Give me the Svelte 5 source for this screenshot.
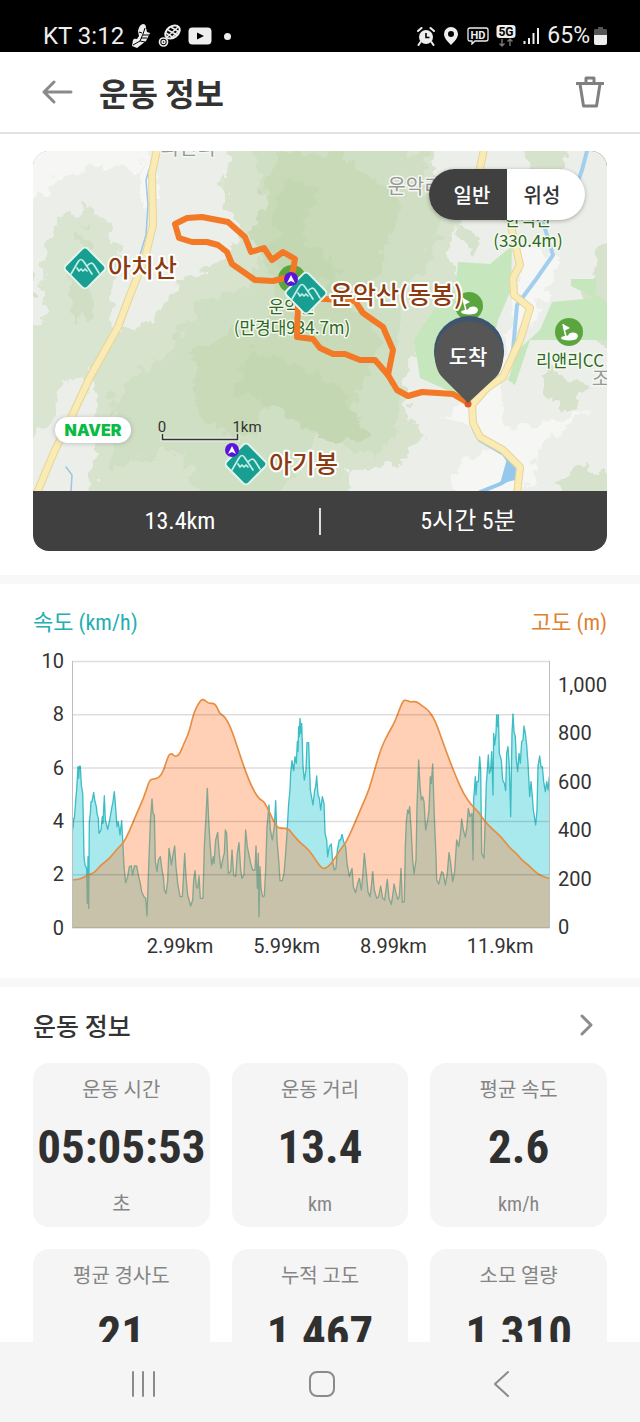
<script>
  let mapType = $state('일반');

  const stats = [
    { label: '운동 시간', value: '05:05:53', unit: '초' },
    { label: '운동 거리', value: '13.4', unit: 'km' },
    { label: '평균 속도', value: '2.6', unit: 'km/h' },
    { label: '평균 경사도', value: '21', unit: '%' },
    { label: '누적 고도', value: '1,467', unit: 'm' },
    { label: '소모 열량', value: '1,310', unit: 'kcal' }
  ];

  const speedTicks = [10, 8, 6, 4, 2, 0];
  const heightTicks = ['0', '200', '400', '600', '800', '1,000'];
  const distTicks = ['2.99km', '5.99km', '8.99km', '11.9km'];

  // Samples are stored per leg, in thirds of a chart unit.
  const heightLegs = [
    '157,840 171,839 185,835 210,823 225,817 240,797 270,775 292,745 310,730 330,690 350,640 372,592 388,540 400,537 415,535 430,515 445,465 455,460 465,470 478,465 492,430 508,395 522,335 542,300 553,298 565,311 585,309 598,338',
    '3,222 18,235 35,270 55,330 75,390 95,440 115,475 133,485 150,520 170,562 185,565 205,565 220,585 240,608 268,630 290,665 308,688 325,680 340,662 360,630 378,608 400,560 425,500 447,450 465,385 485,320 505,280 525,245 548,182 558,180 570,186 590,184',
    '4,316 25,330 45,360 70,430 90,485 110,535 130,580 155,617 175,635 195,665 220,690 245,712 270,745 290,760 305,780 325,795 350,820 370,830 388,835'
  ];
  const speedLegs = [
    '157,690 160,680 161,655 163,655 165,630 168,590 170,570 172,535 174,500 176,535 178,500 180,498 181,500 184,555 188,580 190,660 192,770 195,795 200,805 202,910 204,770 206,925 208,665 211,640 213,605 216,605 221,577 224,600 229,620 231,640 235,655 237,700 243,690 247,650 249,670 253,587 256,660 263,688 270,655 275,625 279,605 283,575 287,625 291,680 295,665 300,705 305,662 308,720 312,800 317,848 323,830 328,800 334,798 338,825 343,798 350,798 356,830 361,850 365,875 372,890 377,895 381,948 385,830 391,665 396,597 399,640 403,645 406,785 411,815 415,780 421,770 426,810 430,830 433,870 438,880 443,845 447,745 451,770 454,795 458,770 464,738 468,800 473,850 480,890 487,890 490,840 494,760 498,830 503,885 512,918 518,900 521,840 525,812 529,860 533,865 537,828 541,895 549,895 553,740 558,650 562,565 566,660 570,730 575,795 580,770 582,790 587,720 593,697 598,765',
    '3,685 10,650 13,640 16,570 20,580 25,700 32,695 36,630 41,705 47,710 52,640 57,608 62,690 66,715 72,705 77,570 82,620 87,645 92,670 98,690 105,690 108,618 112,745 115,640 117,830 120,680 123,745 128,770 133,768 137,690 141,560 147,495 151,570 157,600 163,560 167,482 171,600 176,660 180,722 187,722 192,700 197,640 201,580 206,490 210,450 212,400 216,362 221,392 225,350 229,370 232,305 234,335 236,260 238,290 240,235 243,280 245,250 247,310 249,380 253,420 258,390 261,308 266,308 268,370 271,450 279,495 284,450 287,440 290,408 294,465 298,475 302,510 307,470 312,490 315,580 320,600 323,650 328,620 334,612 338,665 343,690 348,685 352,630 358,600 362,600 366,583 371,605 377,620 381,670 388,710 396,685 400,740 407,758 413,730 418,715 424,750 429,700 433,640 438,690 444,755 450,770 454,740 458,695 463,750 470,775 476,770 482,738 488,775 494,780 499,740 502,718 507,775 514,793 519,760 522,732 527,755 533,778 538,770 543,685 547,787 553,785 556,620 559,545 563,510 566,520 569,500 574,580 578,660 582,702 588,660 591,500 596,360 600,440 604,480 608,470 612,485 617,570 623,540 627,510 631,410 634,430 638,372 643,530 648,650',
    '50,840 56,852 65,815 70,820 76,855 82,820 87,758 92,790 98,845 104,815 110,720 116,740 121,705 125,657 130,690 136,712 141,680 145,625 150,650 156,640 159,780 161,600 164,560 166,530 168,585 171,545 175,545 179,470 182,510 185,760 192,775 196,650 199,550 201,525 205,465 208,520 212,510 215,455 219,585 221,400 224,435 228,400 230,345 233,380 235,345 238,460 244,480 248,540 253,550 257,572 260,460 264,440 268,500 272,650 276,400 279,342 282,395 286,410 289,480 293,515 297,460 301,490 305,425 309,420 312,378 316,400 320,435 324,490 329,590 333,545 337,590 340,630 347,675 351,630 354,500 359,468 363,500 367,500 371,545 376,575 380,545 384,570 388,530'
  ];
  const legOrigin = [[0, 0], [600, 120], [1200, 0]];

  const points = (legs) =>
    legs.flatMap((leg, i) =>
      leg.split(' ').map((p) => {
        const [x, y] = p.split(',').map(Number);
        return [x + legOrigin[i][0], y + legOrigin[i][1]];
      })
    );
  const straight = (pts) => 'M' + pts.map((p) => p.join(' ')).join('L');
  // Quadratic segments through the midpoints round off the height profile.
  const smooth = (pts) => {
    let d = `M${pts[0].join(' ')}`;
    for (let i = 1; i < pts.length - 1; i++) {
      const [x, y] = pts[i];
      const [nx, ny] = pts[i + 1];
      d += `Q${x} ${y} ${(x + nx) / 2} ${(y + ny) / 2}`;
    }
    return d + `L${pts[pts.length - 1].join(' ')}`;
  };
  const area = (path) => path + 'L1588 984L157 984Z';

  const heightLine = smooth(points(heightLegs));
  const speedLine = straight(points(speedLegs));
</script>

{#snippet peak(x, y)}
  <g transform="translate({x} {y})">
    <rect x="-15.500" y="-15.500" width="31" height="31" rx="4" transform="rotate(45)" fill="#189f92" stroke="#e2f5ee" stroke-width="2" />
    <path d="M-14 6L-7 -6Q-4 -11 -1 -6L7 6M2 -2Q6 -7 9 -3L14 5M-8 0L-6 3L-4 1L-2 3L0 1L2 3" fill="none" stroke="#c4efe7" stroke-width="1.700" stroke-linejoin="round" stroke-linecap="round" />
  </g>
{/snippet}

{#snippet spot(x, y)}
  <g transform="translate({x} {y})">
    <circle r="7" fill="#5a16d8" />
    <path d="M0 -4L4 4L0 2L-4 4Z" fill="#fff" />
  </g>
{/snippet}

{#snippet golf(x, y)}
  <g transform="translate({x} {y})">
    <circle r="14" fill="#5ba53f" />
    <path d="M-6 -8L1 -4L-5 -1Z" fill="#fff" />
    <path d="M-6 -8L-3 5" fill="none" stroke="#fff" stroke-width="1.500" />
    <ellipse cx="0" cy="6" rx="8" ry="2.500" fill="#fff" />
    <ellipse cx="4" cy="4" rx="5" ry="3.500" fill="#fff" />
  </g>
{/snippet}

<div class="phone">
  <div class="status">
    <div class="side">
      <span>KT 3:12</span>
      <svg width="20" height="26" viewBox="0 0 20 26">
        <path d="M1 23L2 17Q3 15 6 16L8 13L7 8Q8 2 12 1Q15 1 15 5L16 9L19 10L15 18L6 25Z" fill="#eee" />
        <path d="M2 22L9 18L12 11L14 5M12 12L18 12M10 15L16 15M9 18L14 19M8 9L11 10" stroke="#000" stroke-width="1" fill="none" />
      </svg>
      <svg width="23" height="24" viewBox="0 0 23 24">
        <g fill="none" stroke="#eee">
          <ellipse cx="14.500" cy="8" rx="8" ry="5.600" transform="rotate(-38 14.500 8)" stroke-width="2" />
          <path d="M8 9L16 14M10 6L19 11M13 3L21 8M9 13L20 3M13 14L22 6" stroke-width="1.500" />
          <circle cx="5.500" cy="18" r="4" stroke-width="1.700" />
          <circle cx="5.500" cy="18" r="1.500" stroke-width="1.500" />
        </g>
      </svg>
      <svg width="24" height="18" viewBox="0 0 24 18"><rect x="0.500" y="0.500" width="23" height="17" rx="4" fill="#eee" /><path d="M9 5.500L16 9L9 12.500Z" fill="#000" /></svg>
      <i class="dot"></i>
    </div>
    <div class="side">
      <svg width="18" height="19" viewBox="0 0 18 19">
        <circle cx="9" cy="10" r="7" fill="#eee" />
        <path d="M1 4L4.500 1M17 4L13.500 1M3.500 15L1.500 18M14.500 15L16.500 18" stroke="#eee" stroke-width="2" stroke-linecap="round" />
        <path d="M9 6V10.500H12.500" stroke="#000" stroke-width="1.600" fill="none" />
      </svg>
      <svg width="18" height="20" viewBox="0 0 18 20"><path fill-rule="evenodd" d="M9 1A7 7 0 0 1 16 8C16 12 12 16 9 19C6 16 2 12 2 8A7 7 0 0 1 9 1ZM9 5A3 3 0 1 0 9 11A3 3 0 1 0 9 5Z" fill="#eee" /></svg>
      <svg width="22" height="18" viewBox="0 0 22 18">
        <path d="M3 1H19Q21 1 21 3V12Q21 14 19 14H8L5 17V14H3Q1 14 1 12V3Q1 1 3 1Z" fill="none" stroke="#eee" stroke-width="1.300" />
        <text x="11" y="11.500" text-anchor="middle" fill="#eee" font-size="11" font-weight="700">HD</text>
      </svg>
      <svg width="20" height="24" viewBox="0 0 20 24">
        <rect x="0.500" y="1" width="19" height="13" rx="3" fill="#eee" />
        <text x="10" y="12" text-anchor="middle" fill="#000" font-size="12" font-weight="700">5G</text>
        <path d="M6 15V22M3.500 19.500L6 22L8.500 19.500M14 22V15M11.500 17.500L14 15L16.500 17.500" fill="none" stroke="#777" stroke-width="1.400" />
      </svg>
      <svg width="17" height="18" viewBox="0 0 17 18"><path d="M1.500 14V17M6 11V17M10.500 6V17M15 1V17" stroke="#eee" stroke-width="2" /></svg>
      <span class="pct">65%<svg width="13" height="19" viewBox="0 0 13 19"><path d="M4 0H9V2H12Q13 2 13 4V9H0V4Q0 2 1 2H4Z" fill="#555" /><path d="M0 8H13V16Q13 18 11 18H2Q0 18 0 16Z" fill="#eee" /></svg></span>
    </div>
  </div>

  <header>
    <button class="icon" aria-label="뒤로">
      <svg width="32" height="26" viewBox="0 0 32 26"><path d="M30 13H3M13 3L3 13L13 23" fill="none" stroke="#8a8a8a" stroke-width="3" stroke-linecap="round" stroke-linejoin="round" /></svg>
    </button>
    <h1>운동 정보</h1>
    <button class="icon" aria-label="삭제">
      <svg width="28" height="32" viewBox="0 0 28 32"><path d="M1 7.500H27M10 7V2H18V7M4 8L7.500 30H20.500L24 8" fill="none" stroke="#808080" stroke-width="3" stroke-linejoin="round" stroke-linecap="round" /></svg>
    </button>
  </header>

  <main>
    <section class="map-section">
      <div class="card">
        <div class="map">
          <svg viewBox="33 151 574 340" role="img" aria-label="운동 경로 지도">
            <defs>
              <filter id="rough" x="-10%" y="-10%" width="120%" height="120%">
                <feTurbulence type="fractalNoise" baseFrequency="0.07" numOctaves="3" seed="8" />
                <feDisplacementMap in="SourceGraphic" scale="26" xChannelSelector="R" yChannelSelector="G" />
              </filter>
              <filter id="soft" x="-20%" y="-20%" width="140%" height="150%"><feGaussianBlur stdDeviation="2" /></filter>
            </defs>
            <rect x="33" y="151" width="574" height="340" fill="#eceee9" />
            <g filter="url(#rough)">
              <path d="M20 140H150L140 170L100 165L60 180L20 210Z M145 150L160 190L150 215L138 200Z M520 250L560 255L545 300L520 330L500 390L510 430L590 410L540 445L525 500H460L450 480L490 440L445 415L470 385L505 350Z" fill="#f6f6f5" />
              <path d="M52 225L85 205L112 228L118 260L108 300L112 330L98 365L70 390L62 420L20 440V330L48 320L40 290Z" fill="#d9e4d1" />
              <path d="M235 140H440L430 170L460 200L450 250L455 275L470 285L440 310L420 345L400 385L410 410L425 440L395 465L350 470L345 500H90V370L120 330L150 320L180 280L225 260L240 230L220 190Z" fill="#d7e3cd" />
              <path d="M62 385L90 378L96 420L93 500H35Z" fill="#eceee9" />
              <path d="M250 140H400L420 180L440 215L430 260L400 300L400 330L385 370L400 400L395 440L360 455L320 430L290 470L280 500H200L180 450L110 470L115 390L170 350L200 300L250 290L270 220Z" fill="#cfdfc3" />
              <path d="M280 150L340 155L400 200L380 270L350 300L385 345L370 370L350 420L310 420L270 400L250 440L200 420L190 360L230 330L265 320L280 290L250 240Z" fill="#c8dab8" />
              <path d="M285 180L320 190L300 240L345 270L330 290L300 270L270 250Z M250 350L310 370L350 400L370 440L320 440L280 410L235 390Z" fill="#c3d7b2" />
              <path d="M85 225L95 260L92 310L75 330L70 280Z M390 160L430 150L415 200L440 240L410 280Z" fill="#d0dfc4" />
              <path d="M520 140H570L560 175L530 180Z M595 250L620 245V360L595 340L585 300Z M550 370L590 385L570 410L545 395Z M560 480L580 465L610 475V500H555Z M20 150L30 240V300H20Z M455 225L480 235L470 255Z" fill="#d6e2cb" />
            </g>
            <path d="M458 262L490 264L512 246L511 290L498 320L490 355L500 375L470 400L420 378L414 340L440 300L455 290Z" fill="#c6e6bd" />
            <path d="M571 279H596V294L607 302V340H530L515 385L508 380L518 350L540 330L552 302L595 298L571 286Z" fill="#c6e6bd" />
            <g fill="none" stroke-linejoin="round" stroke-linecap="round">
              <path d="M155 151L146 180L148 205L146 235L140 255M66 467L72 475L71 491" stroke="#9cc6e6" stroke-width="1.500" />
              <path d="M587 151L582 170L575 190L543 222L553 255L537 278L517 305L513 350L503 378" stroke="#a3cfee" stroke-width="4" />
              <path d="M471 410L473 428L480 440L504 454L512 466L510 478L500 484L480 492" stroke="#94c8ec" stroke-width="4" />
              <path d="M508 455L518 468L515 480L500 484Z" fill="#94c8ec" />
              <g stroke="#e6d594" stroke-width="8">
                <path id="road-west" d="M158 145L152 173L153 225L145 258L130 295L118 327L90 377L70 420L55 450L36 495" />
                <path id="road-east" d="M485 145L480 168L495 205L510 222L517 252L520 265L513 278L514 295L530 308L520 340L503 377L487 388L472 405L473 423L480 437L503 450L520 467L517 495" />
              </g>
              <g stroke="#faeab4" stroke-width="6"><use href="#road-west" /><use href="#road-east" /></g>
              <circle cx="292" cy="279" r="14" fill="#5ba53f" />
            </g>
            {@render golf(469, 306)}
            {@render golf(569, 332)}

            <g class="place">
              <text x="188" y="155" class="gray">외전리</text>
              <text x="415" y="194" class="gray">운악리</text>
              <text x="601" y="386" class="gray">조</text>
              <g class="green">
                <text x="292" y="313">운악산</text>
                <text x="292" y="334">(만경대934.7m)</text>
                <text x="528" y="226">한석산</text>
                <text x="528" y="247">(330.4m)</text>
                <text x="570" y="367">리앤리CC</text>
              </g>
            </g>

            <g fill="none" stroke="#f37926" stroke-width="6" stroke-linejoin="round" stroke-linecap="round">
              <path d="M292 276L273 281L255 280L232 264L227 252L218 245L207 242L192 242L179 238L175 224L187 218L202 217L228 222L245 237L251 252L264 248L272 260L283 252L295 259L292 276" />
              <path d="M298 300L297 337L313 339L320 348L333 354L345 354L360 360L375 360L388 375L397 390L408 396L422 392L453 394L468 403" />
              <path d="M310 298L355 301L363 313L383 327L393 350L388 375" />
            </g>

            {@render peak(85, 268)}
            {@render peak(306, 293)}
            {@render peak(246, 464)}
            {@render spot(291, 279)}
            {@render spot(232, 450)}
            <g class="summit">
              <text x="108" y="277">아치산</text>
              <text x="330" y="304">운악산(동봉)</text>
              <text x="269" y="473">아기봉</text>
            </g>

            <circle cx="468" cy="404" r="3.500" fill="#e05a28" />
            <path d="M468 400L443 376C437 370 434 360 434 351A35 35 0 0 1 504 351C504 360 501 370 495 376Z" fill="#3d5570" />
            <path d="M468 403L443 378C437 372 435 364 435 355A34 34 0 0 1 503 355C503 364 501 372 495 378Z" fill="#565656" />
            <text x="468" y="364" class="pin">도착</text>

            <rect x="54" y="417" width="78" height="27" rx="13" fill="#889" opacity="0.400" filter="url(#soft)" />
            <rect x="55" y="417" width="76" height="26" rx="13" fill="#fff" />
            <text x="93" y="436" class="naver">NAVER</text>
            <path d="M162.500 434V439.500H237.500V434" fill="none" stroke="#fff" stroke-width="4" opacity="0.500" />
            <path d="M162.500 434V439.500H237.500V434" fill="none" stroke="#333" stroke-width="1.500" />
            <g class="scale"><text x="162" y="432">0</text><text x="247" y="432">1km</text></g>
          </svg>
          <div class="toggle">
            {#each ['일반', '위성'] as type}
              <button class:on={mapType === type} aria-pressed={mapType === type} onclick={() => (mapType = type)}>{type}</button>
            {/each}
          </div>
        </div>
        <div class="summary"><span>13.4km</span><i></i><span>5시간 5분</span></div>
      </div>
    </section>

    <section class="chart-section">
      <div class="legend"><span class="speed">속도 (km/h)</span><span class="height">고도 (m)</span></div>
      <svg class="chart" viewBox="33 646 574 316" role="img" aria-label="속도와 고도 그래프">
        <g transform="translate(20 600) scale(0.333333)" stroke-linejoin="round">
          <path d={area(speedLine)} fill="#a8e9ed" />
          <path d={speedLine} fill="none" stroke="#3dbdc5" stroke-width="4" />
          <path d={area(heightLine)} fill="#ff7d32" fill-opacity="0.360" />
          <path d={heightLine} fill="none" stroke="#e78e42" stroke-width="5" />
        </g>
        <g stroke="#000" stroke-opacity="0.130" stroke-width="1.500">
          {#each speedTicks as _, i}<path d="M72 {661.5 + i * 53.3}H550" />{/each}
        </g>
        <path d="M72.500 661V928M549.500 661V928" stroke="#bdbdbd" />
        {#each speedTicks as tick, i}<text x="64" y={668 + i * 53.3} text-anchor="end">{tick}</text>{/each}
        {#each heightTicks as tick, i}<text x="558" y={934 - i * 48.4}>{tick}</text>{/each}
        {#each distTicks as tick, i}<text x={180 + i * 106.7} y="953" text-anchor="middle">{tick}</text>{/each}
      </svg>
    </section>

    <section class="info">
      <div class="info-head">
        <h2>운동 정보</h2>
        <button class="icon" aria-label="더보기">
          <svg width="16" height="22" viewBox="0 0 16 22"><path d="M3 2L12 11L3 20" fill="none" stroke="#8c8c8c" stroke-width="3" stroke-linecap="round" stroke-linejoin="round" /></svg>
        </button>
      </div>
      <div class="grid">
        {#each stats as s}
          <div class="stat"><span>{s.label}</span><strong>{s.value}</strong><span>{s.unit}</span></div>
        {/each}
      </div>
    </section>
  </main>

  <nav>
    <button class="icon" aria-label="최근 앱"><svg width="28" height="28" viewBox="0 0 28 28"><path d="M4 2V26M14 2V26M25 2V26" stroke="#8a8a8a" stroke-width="2" stroke-linecap="round" /></svg></button>
    <button class="icon" aria-label="홈"><svg width="28" height="28" viewBox="0 0 28 28"><rect x="2" y="2" width="24" height="24" rx="7" fill="none" stroke="#8a8a8a" stroke-width="2" /></svg></button>
    <button class="icon" aria-label="뒤로 가기"><svg width="28" height="28" viewBox="0 0 28 28"><path d="M21 2L8 14L21 26" fill="none" stroke="#8a8a8a" stroke-width="2" stroke-linecap="round" stroke-linejoin="round" /></svg></button>
  </nav>
</div>

<style>
  :global(body) { margin: 0; background: #fff; }
  .phone {
    display: flex;
    flex-direction: column;
    height: 100vh;
    overflow: hidden;
    color: #333;
    font-family: "Roboto Condensed", "Noto Sans CJK KR", sans-serif;
  }
  button {
    margin: 0;
    padding: 0;
    border: 0;
    background: none;
    font: inherit;
    color: inherit;
    cursor: pointer;
  }
  .icon { display: flex; }
  h1, h2 { margin: 0; font-family: "Noto Sans CJK KR", sans-serif; }

  .status {
    display: flex;
    flex: none;
    justify-content: space-between;
    height: 32px;
    padding: 20px 33px 0 43px;
    background: #000;
    color: #eee;
    font: 24px/32px Roboto, sans-serif;
  }
  .side { display: flex; align-items: center; gap: 7px; }
  .pct { display: flex; align-items: center; gap: 4px; font-size: 23px; }
  .dot { width: 7px; height: 7px; margin-left: 5px; border-radius: 50%; background: #eee; }

  header {
    display: flex;
    flex: none;
    align-items: center;
    gap: 26px;
    height: 80px;
    padding: 0 36px 0 41px;
    border-bottom: 2px solid #e2e2e2;
  }
  h1 { flex: 1; font-size: 32px; line-height: 44px; font-weight: 700; }

  main { flex: 1; min-height: 0; overflow: hidden; }
  section { padding: 0 33px; }
  section + section { border-top: 9px solid #f8f8f8; }
  .map-section { padding-top: 17px; padding-bottom: 24px; }
  .card { overflow: hidden; border-radius: 16px; background: #404040; }
  .map { position: relative; }
  .map svg, .chart { display: block; width: 100%; height: auto; }
  .map text { font-family: "Noto Sans CJK KR", sans-serif; }
  .place text { text-anchor: middle; paint-order: stroke; stroke: #f4f8f0; stroke-width: 3px; stroke-linejoin: round; font-size: 17px; }
  .place .gray { fill: #999; font-size: 20px; }
  .green { fill: #2c6a22; }
  .summit text { fill: #8c3a10; paint-order: stroke; stroke: #fff; stroke-width: 4px; stroke-linejoin: round; font-size: 25px; font-weight: 500; }
  .pin { fill: #fff; text-anchor: middle; font-size: 21px; font-weight: 500; }
  .map .naver { fill: #09bb44; text-anchor: middle; font: 900 16px Inter, sans-serif; }
  .map .scale text { fill: #333; text-anchor: middle; font: 15px Roboto, sans-serif; }

  .toggle {
    position: absolute;
    top: 18px;
    right: 22px;
    display: flex;
    overflow: hidden;
    border-radius: 26px;
    background: #fff;
    box-shadow: 0 1px 4px rgba(0, 0, 0, 0.3);
  }
  .toggle button { width: 78px; height: 51px; padding-right: 8px; font-size: 20px; font-weight: 500; }
  .toggle button:first-child { padding: 0 0 0 8px; }
  .toggle .on { background: #404040; color: #fff; }

  .summary {
    display: grid;
    grid-template-columns: 1fr 2px 1fr;
    align-items: center;
    height: 60px;
    color: #fff;
    font-size: 24px;
    line-height: 32px;
    text-align: center;
  }
  .summary span { padding-left: 8px; }
  .summary i { height: 27px; background: #ddd; }

  .chart-section { padding-top: 24px; padding-bottom: 16px; }
  .legend { display: flex; justify-content: space-between; margin-bottom: 8px; font-size: 22px; line-height: 30px; }
  .speed { color: #23aeb2; }
  .height { color: #e0812f; }
  .chart text { fill: #333; font: 20px Roboto, sans-serif; }

  .info { padding-top: 20px; }
  .info-head { display: flex; align-items: center; justify-content: space-between; height: 36px; padding-right: 12px; margin-bottom: 20px; }
  h2 { font-size: 25px; line-height: 32px; font-weight: 500; }
  .grid { display: grid; grid-template-columns: repeat(3, minmax(0, 1fr)); gap: 22px; }
  .stat {
    display: flex;
    flex-direction: column;
    align-items: center;
    gap: 12px;
    padding: 12px 0 8px;
    border-radius: 16px;
    background: #f5f5f5;
    color: #858585;
    font-size: 20px;
    line-height: 30px;
  }
  .stat strong { color: #303030; font-size: 47px; line-height: 60px; }

  nav {
    display: flex;
    flex: none;
    align-items: center;
    justify-content: space-between;
    height: 80px;
    padding: 0 125px 0 129px;
    background: #f5f5f5;
  }
  nav .icon { margin-top: 4px; }
</style>
